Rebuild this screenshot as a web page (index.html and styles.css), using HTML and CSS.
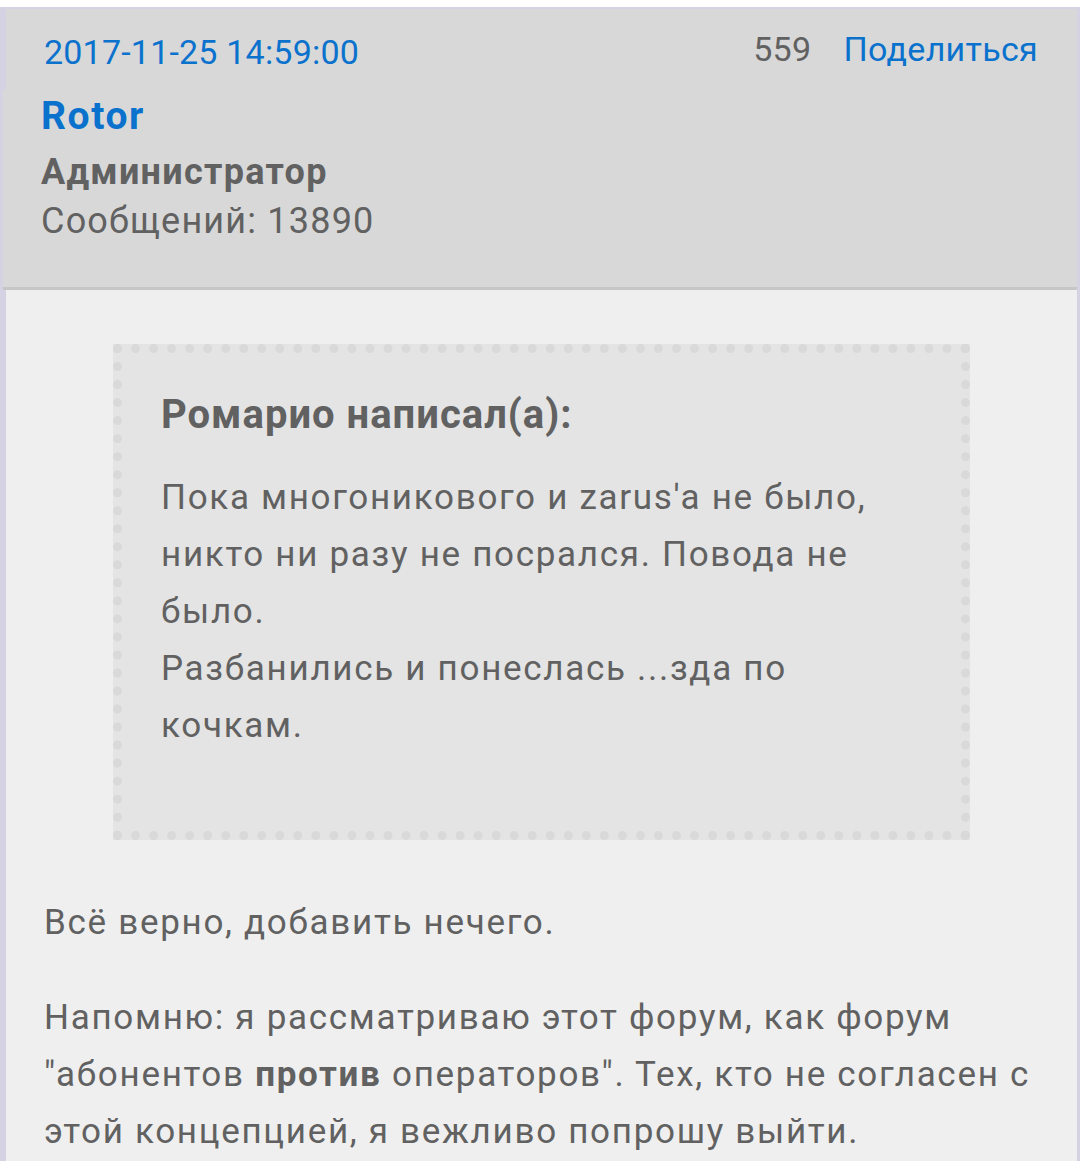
FILE: index.html
```html
<!DOCTYPE html>
<html lang="ru">
<head>
  <meta charset="UTF-8">
  <title>Сообщение</title>
  <link rel="stylesheet" href="styles.css">
</head>
<body>
  <div class="post">
    <div class="post-head">
      <div class="head-top">
        <a class="post-date" href="#">2017-11-25 14:59:00</a>
        <div class="head-right">
          <span class="post-num">559</span>
          <a class="share" href="#">Поделиться</a>
        </div>
      </div>
      <div class="head-user">
        <a class="user-name" href="#">Rotor</a>
        <div class="user-rank">Администратор</div>
        <div class="user-posts">Сообщений: 13890</div>
      </div>
    </div>

    <div class="post-body">
      <blockquote class="quote">
        <div class="quote-title">Ромарио написал(а):</div>
        <p>Пока многоникового и zarus'a не было, никто ни разу не посрался. Повода не было.<br>Разбанились и понеслась ...зда по кочкам.</p>
      </blockquote>

      <p>Всё верно, добавить нечего.</p>
      <p>Напомню: я рассматриваю этот форум, как форум "абонентов <strong>против</strong> операторов". Тех, кто не согласен с этой концепцией, я вежливо попрошу выйти.</p>
    </div>
  </div>
</body>
</html>
```

FILE: styles.css
```css
body {
  margin: 0;
  padding-top: 7px;
  background-color: #ffffff;
  font-family: Roboto, "Noto Sans", Arial, sans-serif;
  color: #616161;
}
a {
  color: #0a72cd;
  text-decoration: none;
}
.post {
  background-color: #d4d2e3;
  padding: 2px 3px 0 0;
}
.post-head {
  margin-left: 3px;
  background-color: #d8d8d8;
  border-bottom: 3px solid #c6c6c6;
}
.head-top {
  display: flex;
  justify-content: space-between;
  align-items: flex-start;
  margin-left: 3px;
  padding: 23px 39px 18px 38px;
  background-color: #d8d8d8;
  box-shadow: -3px 0 0 #d4d2e3;
}
.post-date {
  font-size: 34px;
  line-height: 40px;
  letter-spacing: 0.2px;
}
.head-right {
  display: flex;
  gap: 32px;
  margin-top: -3px;
  font-size: 34px;
  line-height: 40px;
  letter-spacing: 0.3px;
}
.head-user {
  padding: 2px 0 41px 38px;
}
.user-name {
  display: block;
  font-size: 39px;
  font-weight: bold;
  line-height: 48px;
  letter-spacing: 1.6px;
  margin-bottom: 8px;
}
.user-rank {
  font-size: 36px;
  font-weight: bold;
  line-height: 48px;
  letter-spacing: 1.3px;
}
.user-posts {
  font-size: 36px;
  line-height: 50px;
  letter-spacing: 1.2px;
}
.post-body {
  margin-left: 6px;
  padding: 54px 34px 60px 38px;
  background-color: #efefef;
  font-size: 35px;
  line-height: 57px;
  letter-spacing: 1.7px;
}
.post-body p {
  margin: 0 0 38px 0;
}
.quote {
  margin: 0 73px 54px 69px;
  padding: 38px 37px 40px 39px;
  background-color: #e4e4e4;
  border: 9px dotted #d9d9d9;
}
.quote-title {
  font-size: 40px;
  font-weight: bold;
  line-height: normal;
  letter-spacing: 1px;
  margin-bottom: 31px;
}
.quote p {
  margin: 0 0 37px 0;
}
```
